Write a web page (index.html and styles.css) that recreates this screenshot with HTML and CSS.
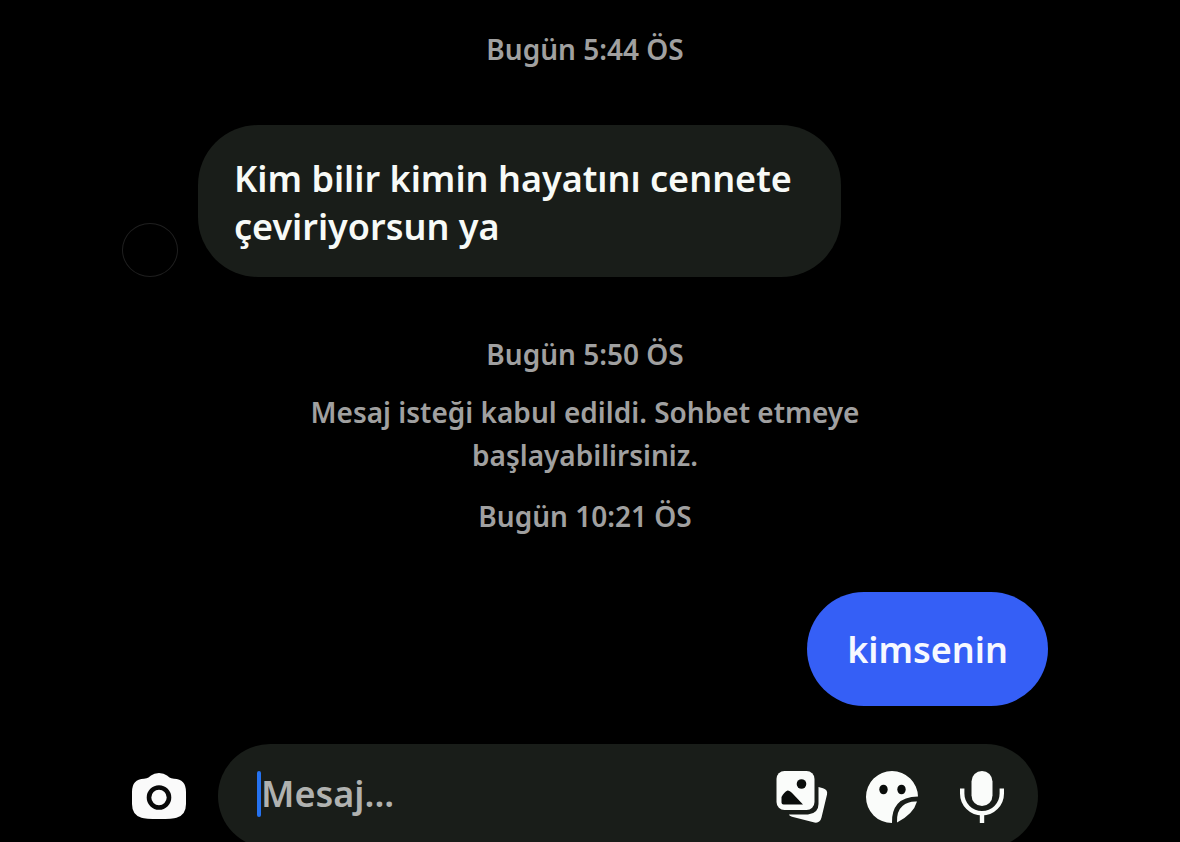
FILE: index.html
```html
<!DOCTYPE html>
<html lang="tr">
<head>
<meta charset="utf-8">
<meta name="viewport" content="width=device-width, initial-scale=1">
<title>Sohbet</title>
<link rel="stylesheet" href="styles.css">
</head>
<body>
<main class="chat">
  <section class="thread">
    <p class="stamp">Bugün 5:44 ÖS</p>
    <div class="row row-in">
      <span class="avatar"></span>
      <p class="bubble bubble-in">Kim bilir kimin hayatını cennete çeviriyorsun ya</p>
    </div>
    <p class="stamp">Bugün 5:50 ÖS</p>
    <p class="notice">Mesaj isteği kabul edildi. Sohbet etmeye başlayabilirsiniz.</p>
    <p class="stamp">Bugün 10:21 ÖS</p>
    <div class="row row-out">
      <p class="bubble bubble-out">kimsenin</p>
    </div>
  </section>
  <form class="composer">
    <button class="icon-button" type="button" aria-label="Kamera">
      <svg width="56" height="48" viewBox="0 0 56 48">
        <path fill="#fafafa" d="M20 3.500Q23 1 28 1T36 3.500L38.500 5.600Q40 6.700 43 6.700Q55 7 55 20V32Q55 43 45.500 45.800Q42 47 28 47T10.500 45.800Q1 43 1 32V20Q1 7 13 6.700Q16 6.700 17.500 5.600Z"/>
        <circle cx="28" cy="25.500" r="10" fill="none" stroke="#080808" stroke-width="4.600"/>
      </svg>
    </button>
    <div class="field">
      <span class="caret"></span>
      <input class="field-input" type="text" placeholder="Mesaj..." aria-label="Mesaj">
      <div class="tools">
        <button class="icon-button" type="button" aria-label="Galeri">
          <svg width="54" height="54" viewBox="0 0 54 54">
            <path fill="#fafcfa" d="M43.500 17L48 18.200Q53 19.500 52 24.500L46.500 47.500Q45 53.500 39.500 52.500L17 46.800Q14 46 14 44.500H33Q43.500 43.500 43.500 34Z"/>
            <rect x="1.500" y="1" width="38" height="39" rx="8" fill="#fafcfa"/>
            <circle cx="26.500" cy="14" r="4.800" fill="#0a0d0b"/>
            <path fill="#0a0d0b" d="M6.500 27Q9 22 12.500 20.500Q15 20.500 18.500 24.500L28 34.500H8.500Q6.500 34.500 6.500 32.500Z"/>
          </svg>
        </button>
        <button class="icon-button" type="button" aria-label="Çıkartma">
          <svg width="54" height="54" viewBox="0 0 54 54">
            <path fill="#fafcfa" d="M27 1A26 26 0 0 1 53 26.500Q39 26.500 32.500 34Q26.500 41 27 53A26 26 0 0 1 27 1Z"/>
            <path fill="#fafcfa" d="M52 31.500Q48.500 44 32 52.500Q31.500 41 37.500 36Q43 31 52 31.500Z"/>
            <ellipse cx="18.500" cy="19.500" rx="4.200" ry="4.800" fill="#0a0d0b"/>
            <ellipse cx="36.500" cy="19.500" rx="4.200" ry="4.800" fill="#0a0d0b"/>
          </svg>
        </button>
        <button class="icon-button" type="button" aria-label="Ses kaydı">
          <svg width="54" height="54" viewBox="-4 0 54 54">
            <rect x="12.500" y="1" width="21" height="35" rx="10.500" fill="#fafcfa"/>
            <path fill="none" stroke="#fafcfa" stroke-width="4.400" d="M3.200 18.500V23.500A19.800 19.800 0 0 0 42.800 23.500V18.500M23 43.500V53"/>
          </svg>
        </button>
      </div>
    </div>
  </form>
</main>
</body>
</html>
```
FILE: styles.css
```css
* {
  box-sizing: border-box;
}

body {
  margin: 0;
  min-height: 100vh;
  overflow: hidden;
  background: #000;
  font-family: "Noto Sans", Roboto, sans-serif;
  font-weight: 600;
}

p {
  margin: 0;
}

.chat {
  padding: 28px 132px 0 122px;
}

.stamp,
.notice {
  color: #a0a0a0;
  font-size: 28px;
  line-height: 43px;
  text-align: center;
}

.notice {
  max-width: 600px;
  margin: 15px auto 18px;
}

.row {
  display: flex;
  align-items: flex-end;
}

.row-in {
  gap: 20px;
  margin: 54px 0 56px;
}

.row-out {
  justify-content: flex-end;
  margin: 54px 0 38px;
}

.avatar {
  flex: none;
  width: 56px;
  height: 54px;
  border: 1px solid #1f1f1f;
  border-radius: 50%;
}

.bubble {
  font-size: 36px;
  line-height: 48px;
}

.bubble-in {
  max-width: 643px;
  padding: 30px 36px 26px;
  border-radius: 60px;
  background: #191d19;
  color: #f7faf7;
}

.bubble-out {
  padding: 34px 40px 32px;
  border-radius: 57px;
  background: #355ff6;
  color: #f6f8ff;
}

.composer {
  display: flex;
  align-items: center;
  gap: 31px;
  padding: 0 10px 0 9px;
}

.field {
  flex: 1;
  display: flex;
  align-items: center;
  min-width: 0;
  height: 104px;
  padding: 0 29px 4px 39px;
  border-radius: 52px;
  background: #191d19;
}

.caret {
  flex: none;
  width: 4px;
  height: 46px;
  border-radius: 2px;
  background: #2572f0;
}

.field-input {
  flex: 1;
  min-width: 0;
  padding: 0;
  border: 0;
  outline: 0;
  background: transparent;
  color: #f7faf7;
  font: inherit;
  font-size: 36px;
  line-height: 48px;
}

.field-input::placeholder {
  color: #b0b2b0;
  opacity: 1;
}

.tools {
  display: flex;
  align-items: center;
  gap: 36px;
  padding-top: 5px;
}

.icon-button {
  flex: none;
  display: block;
  padding: 0;
  border: 0;
  background: transparent;
}

.icon-button svg {
  display: block;
}
```
